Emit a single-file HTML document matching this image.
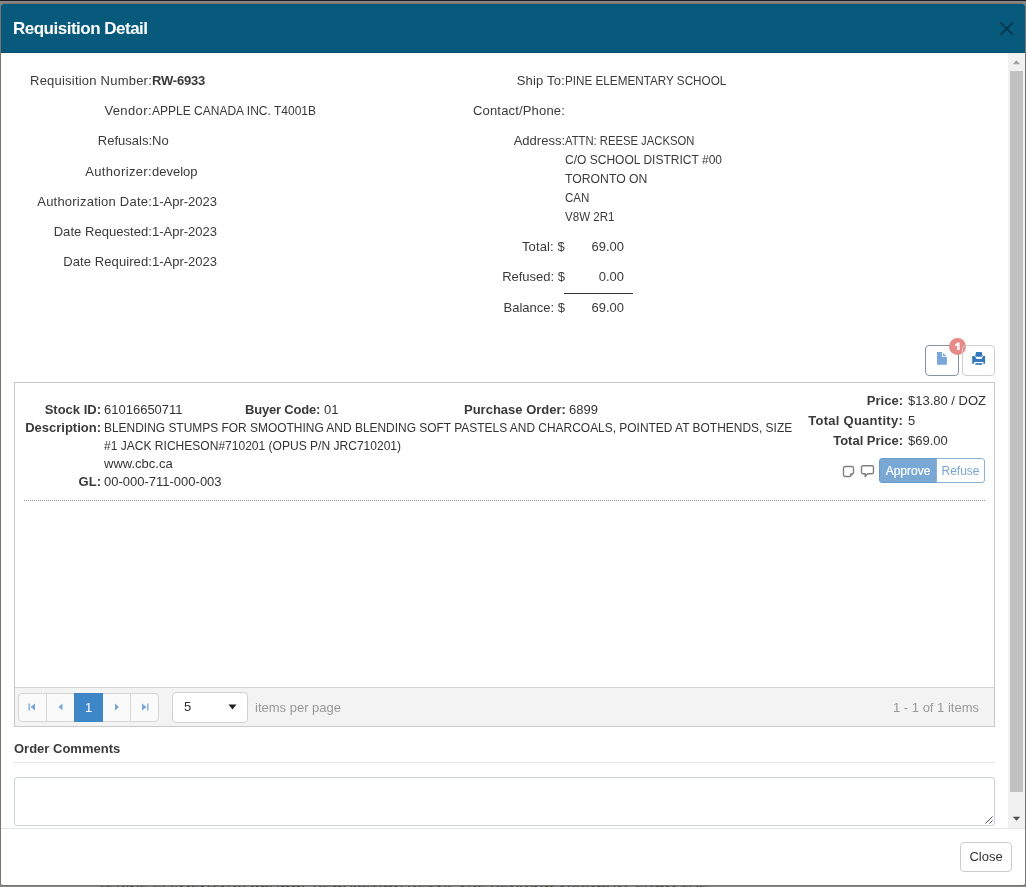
<!DOCTYPE html>
<html><head><meta charset="utf-8">
<style>
*{box-sizing:border-box;margin:0;padding:0}
html,body{width:1026px;height:887px;overflow:hidden;background:#858585;font-family:"Liberation Sans",sans-serif;font-size:13px;line-height:18px;color:#3a3a3a}
#bgtext{position:absolute;left:100px;top:882px;font-size:14px;line-height:16px;color:#3a3a3a;white-space:nowrap}
#topdark{position:absolute;left:0;top:0;width:1026px;height:1px;background:#1c1e22}
#modal{position:absolute;left:0;top:3px;width:1026px;height:883px;background:#fff;border:1px solid #7b7470;border-radius:3px;overflow:hidden}
#hdr{position:absolute;left:0;top:0;width:1024px;height:49px;background:#085a7c;border-bottom:1px solid #05506f}
#title{position:absolute;left:12px;top:15px;color:#fff;font-weight:bold;font-size:17px;line-height:20px;letter-spacing:-0.5px;will-change:transform}
#x{position:absolute;left:999px;top:17px;width:14px;height:14px}
#sb{position:absolute;left:1008px;top:53px;width:17px;height:775px;background:#f1f1f1}
#thumb{position:absolute;left:2px;top:18px;width:13px;height:721px;background:#c1c1c1}
#c{position:absolute;left:0;top:0;width:1026px;height:887px;will-change:transform}
#c div,#c span{position:absolute;white-space:nowrap}
.L{text-align:right}
.v{color:#333}
#ftrline{position:absolute;left:1px;top:828px;width:1024px;height:1px;background:#e5e5e5}
#closebtn{left:960px;top:842px;width:52px;height:30px;border:1px solid #ccc;border-radius:4px;background:#fff;text-align:center;line-height:28px;color:#333}
.b{font-weight:bold}
</style></head><body>
<div id="topdark"></div><div id="bgtext">IT PINE ELEMENTARY SCHOOL REQUISITION DETAIL ARE PENDING APPROVAL FROM THE</div>
<div id="modal">
  <div id="hdr">
    <div id="title">Requisition Detail</div>
    <svg id="x" viewBox="0 0 14 14"><path d="M0.9 1.9L12.6 13.3M12.6 1.9L0.9 13.3" stroke="#05364b" stroke-width="1.7" stroke-linecap="round"/></svg>
  </div>
</div>
<div id="sb"><div id="thumb"></div>
<svg style="position:absolute;left:4px;top:6px" width="9" height="6" viewBox="0 0 9 6"><path d="M0.8 5.2H8.2L4.5 1.2Z" fill="#a3a3a3"/></svg>
<svg style="position:absolute;left:4px;top:763px" width="9" height="6" viewBox="0 0 9 6"><path d="M0.8 0.8H8.2L4.5 4.8Z" fill="#505050"/></svg>
</div>
<div id="c">
  <!-- left column -->
  <div class="L" style="left:0;width:152px;top:72px;letter-spacing:0.22px">Requisition Number:</div><div class="b" style="left:152px;top:72px;letter-spacing:-0.2px">RW-6933</div>
  <div class="L" style="left:0;width:152px;top:102px;letter-spacing:0.4px">Vendor:</div><div style="left:152px;top:102px;transform:scaleX(0.924);transform-origin:0 0">APPLE CANADA INC. T4001B</div>
  <div class="L" style="left:0;width:152px;top:132px">Refusals:</div><div style="left:152px;top:132px">No</div>
  <div class="L" style="left:0;width:152px;top:163px;letter-spacing:0.36px">Authorizer:</div><div style="left:152px;top:163px">develop</div>
  <div class="L" style="left:0;width:152px;top:193px;letter-spacing:0.22px">Authorization Date:</div><div style="left:152px;top:193px">1-Apr-2023</div>
  <div class="L" style="left:0;width:152px;top:223px;letter-spacing:0.05px">Date Requested:</div><div style="left:152px;top:223px">1-Apr-2023</div>
  <div class="L" style="left:0;width:152px;top:253px;letter-spacing:0.1px">Date Required:</div><div style="left:152px;top:253px">1-Apr-2023</div>
  <!-- right column -->
  <div class="L" style="left:400px;width:165px;top:72px;letter-spacing:0.2px">Ship To:</div><div style="left:565px;top:72px;transform:scaleX(0.9);transform-origin:0 0">PINE ELEMENTARY SCHOOL</div>
  <div class="L" style="left:400px;width:165px;top:102px;letter-spacing:0.17px">Contact/Phone:</div>
  <div class="L" style="left:400px;width:165px;top:132px">Address:</div>
  <div style="left:565px;top:132px;transform:scaleX(0.866);transform-origin:0 0">ATTN: REESE JACKSON</div>
  <div style="left:565px;top:151px;transform:scaleX(0.925);transform-origin:0 0">C/O SCHOOL DISTRICT #00</div>
  <div style="left:565px;top:170px;transform:scaleX(0.94);transform-origin:0 0">TORONTO ON</div>
  <div style="left:565px;top:189px;transform:scaleX(0.89);transform-origin:0 0">CAN</div>
  <div style="left:565px;top:208px;transform:scaleX(0.89);transform-origin:0 0">V8W 2R1</div>
  <div class="L" style="left:400px;width:165px;top:238px;letter-spacing:0.15px">Total: $</div><div class="L" style="left:565px;width:59px;top:238px">69.00</div>
  <div class="L" style="left:400px;width:165px;top:268px">Refused: $</div><div class="L" style="left:565px;width:59px;top:268px">0.00</div>
  <div style="left:564px;top:293px;width:69px;height:1px;background:#333"></div>
  <div class="L" style="left:400px;width:165px;top:299px">Balance: $</div><div class="L" style="left:565px;width:59px;top:299px">69.00</div>
  <!-- toolbar buttons -->
  <div style="left:925px;top:345px;width:34px;height:31px;border:1px solid #8593a0;border-radius:4px;background:#fff"></div>
  <svg style="position:absolute;left:936px;top:351px" width="12" height="15" viewBox="0 0 12 15"><path d="M1 1H6.1V5.9H10.9V13.8H1Z" fill="#78a6d6"/><path d="M7 1.9L10.4 5.3H7Z" fill="#78a6d6"/></svg>
  <div style="left:949px;top:338px;width:17px;height:17px;border-radius:50%;background:#e78a88"></div><svg style="position:absolute;left:949px;top:338px" width="17" height="17" viewBox="0 0 17 17"><path d="M8.2 4.6H10.6V12H8.2V7.2L6.6 8.3L5.8 6.9Z" fill="#fff"/></svg>
  <div style="left:962px;top:345px;width:33px;height:31px;border:1px solid #cfcfcf;border-radius:4px"></div>
  <svg style="position:absolute;left:971px;top:351px" width="15" height="15" viewBox="0 0 15 15"><path d="M5.1 1H10.7L11.5 4.4L10.7 5.7H5.1L4.3 4.4Z" fill="#3479bd"/><path d="M1.2 5H3.9L5.5 8H10.5L12.1 5H14.1V12.8H12.4V10.9H3.1V12.8H1.2Z" fill="#3479bd"/><path d="M4.4 12.1H11.2V13.8H4.4Z" fill="#3479bd"/></svg>
  
  <!-- grid -->
  <div style="left:14px;top:382px;width:981px;height:345px;border:1px solid #c9c9c9;background:#fff"></div>
  <div style="left:15px;top:687px;width:979px;height:39px;border-top:1px solid #d5d5d5;background:#f3f3f3"></div>
  <!-- item -->
  <div class="L b" style="left:0;width:101px;top:401px">Stock ID:</div><div class="v" style="left:104px;top:401px">61016650711</div>
  <div class="b" style="left:245px;top:401px;letter-spacing:-0.2px">Buyer Code:</div><div class="v" style="left:324px;top:401px">01</div>
  <div class="b" style="left:464px;top:401px">Purchase Order:</div><div class="v" style="left:569px;top:401px">6899</div>
  <div class="L b" style="left:0;width:101px;top:419px">Description:</div>
  <div class="v" style="left:104px;top:419px;transform:scaleX(0.919);transform-origin:0 0">BLENDING STUMPS FOR SMOOTHING AND BLENDING SOFT PASTELS AND CHARCOALS, POINTED AT BOTHENDS, SIZE</div>
  <div class="v" style="left:104px;top:437px;transform:scaleX(0.926);transform-origin:0 0">#1 JACK RICHESON#710201 (OPUS P/N JRC710201)</div>
  <div class="v" style="left:104px;top:455px">www.cbc.ca</div>
  <div class="L b" style="left:0;width:101px;top:473px">GL:</div><div class="v" style="left:104px;top:473px">00-000-711-000-003</div>
  <div class="L b" style="left:700px;width:203px;top:392px">Price:</div><div class="v" style="left:908px;top:392px">$13.80 / DOZ</div>
  <div class="L b" style="left:700px;width:203px;top:412px;letter-spacing:0.27px">Total Quantity:</div><div class="v" style="left:908px;top:412px">5</div>
  <div class="L b" style="left:700px;width:203px;top:432px">Total Price:</div><div class="v" style="left:908px;top:432px">$69.00</div>
  <svg style="position:absolute;left:842px;top:465px" width="13" height="13" viewBox="0 0 13 13"><path d="M3 1.5H10A1.5 1.5 0 0 1 11.5 3V8L8 11.5H3A1.5 1.5 0 0 1 1.5 10V3A1.5 1.5 0 0 1 3 1.5Z" fill="none" stroke="#808080" stroke-width="1.4" stroke-linejoin="round"/><path d="M11.3 8.2H8.2V11.3Z" fill="#808080"/></svg>
  <svg style="position:absolute;left:860px;top:464px" width="15" height="14" viewBox="0 0 15 14"><path d="M3 1.7H12A1.5 1.5 0 0 1 13.5 3.2V8.3A1.5 1.5 0 0 1 12 9.8H7.5L5.2 12.6V9.8H3A1.5 1.5 0 0 1 1.5 8.3V3.2A1.5 1.5 0 0 1 3 1.7Z" fill="none" stroke="#808080" stroke-width="1.4" stroke-linejoin="round"/></svg>
  <div style="left:879px;top:458px;width:58px;height:25px;background:#78a8d3;border:1px solid #6b9cc9;border-radius:3px 0 0 3px;color:#fff;font-size:12px;line-height:24px;text-align:center;-webkit-text-stroke:0.2px #fff">Approve</div>
  <div style="left:936px;top:458px;width:49px;height:25px;background:#fff;border:1px solid #8bb2d8;border-radius:0 3px 3px 0;color:#79a5d2;font-size:12px;line-height:24px;text-align:center">Refuse</div>
  <div style="left:24px;top:500px;width:961px;height:1px;border-top:1px dotted #999"></div>
  <!-- pager -->
  <div style="left:18px;top:693px;width:141px;height:29px;border:1px solid #d6d6d6;border-radius:4px;background:#fafafa"></div>
  <div style="left:46px;top:694px;width:1px;height:27px;background:#d6d6d6"></div>
  <div style="left:130px;top:694px;width:1px;height:27px;background:#d6d6d6"></div>
  <div style="left:74px;top:693px;width:29px;height:29px;background:#3d87c9;color:#fff;text-align:center;line-height:29px">1</div>
  <svg style="position:absolute;left:27px;top:702px" width="10" height="10" viewBox="0 0 10 10"><path d="M1.5 1.5H2.8V8.5H1.5Z M8 1.5V8.5L3.5 5Z" fill="#76a7d8"/></svg>
  <svg style="position:absolute;left:56px;top:702px" width="10" height="10" viewBox="0 0 10 10"><path d="M6.5 1.5V8.5L2.5 5Z" fill="#76a7d8"/></svg>
  <svg style="position:absolute;left:112px;top:702px" width="10" height="10" viewBox="0 0 10 10"><path d="M3 1.5V8.5L7 5Z" fill="#76a7d8"/></svg>
  <svg style="position:absolute;left:140px;top:702px" width="10" height="10" viewBox="0 0 10 10"><path d="M2 1.5V8.5L6.5 5Z M7.2 1.5H8.5V8.5H7.2Z" fill="#76a7d8"/></svg>
  <div style="left:172px;top:692px;width:76px;height:31px;border:1px solid #d0d0d0;border-radius:4px;background:#fff"></div>
  <div style="left:184px;top:698px;color:#333">5</div>
  <svg style="position:absolute;left:228px;top:704px" width="9" height="6" viewBox="0 0 9 6"><path d="M0.5 0.5H8.5L4.5 5.5Z" fill="#222"/></svg>
  <div style="left:255px;top:699px;color:#999">items per page</div>
  <div class="L" style="left:800px;width:179px;top:699px;color:#999">1 - 1 of 1 items</div>
  <!-- order comments -->
  <div class="b" style="left:14px;top:740px">Order Comments</div>
  <div style="left:14px;top:762px;width:981px;height:1px;background:#e5e5e5"></div>
  <div style="left:14px;top:777px;width:981px;height:49px;border:1px solid #cbd2da;border-radius:3px;background:#fff"></div>
  <svg style="position:absolute;left:984px;top:815px" width="9" height="9" viewBox="0 0 9 9"><path d="M8.6 1.4L1.4 8.6M8.6 5.4L5.4 8.6" stroke="#555" stroke-width="1"/></svg>
  <!-- footer -->
  <div id="ftrline"></div>
  <div id="closebtn">Close</div>
</div>
</body></html>
